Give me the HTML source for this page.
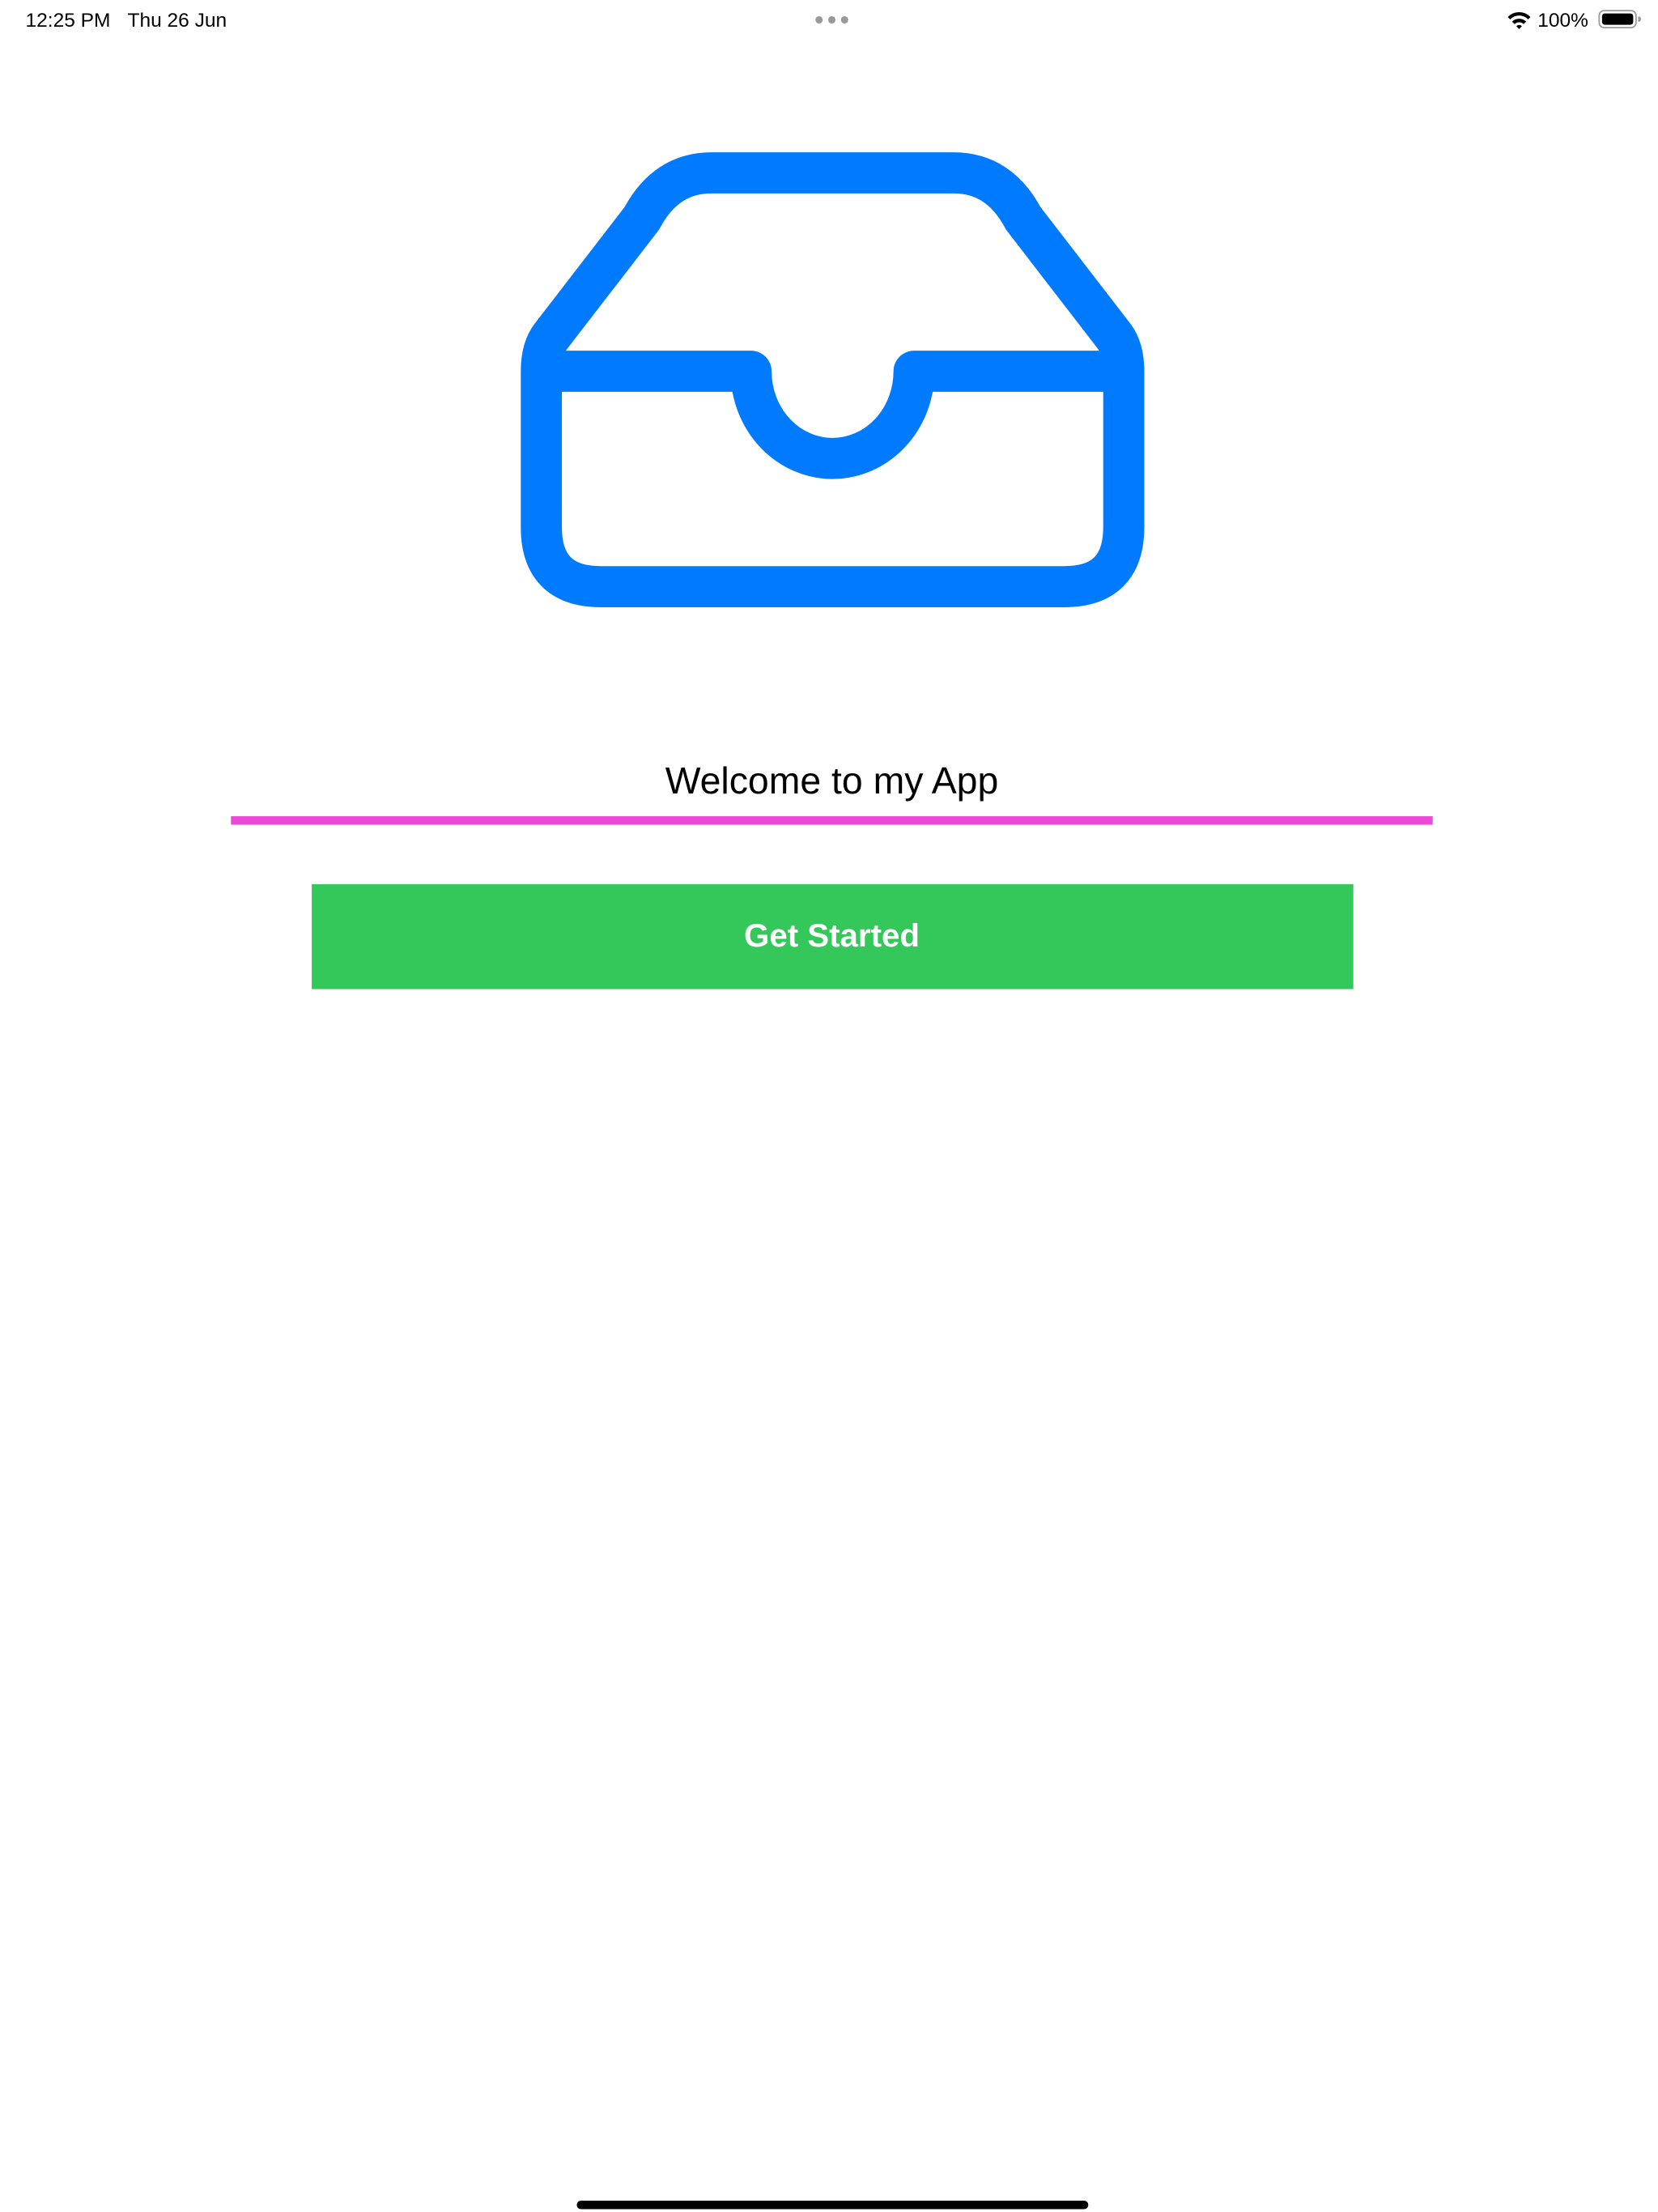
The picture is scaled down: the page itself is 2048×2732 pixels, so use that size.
<!DOCTYPE html>
<html><head><meta charset="utf-8"><style>
html,body{margin:0;padding:0;background:#fff;}
svg{display:block;}
</style></head><body>
<svg width="2048" height="2732" viewBox="0 0 1170 1561" preserveAspectRatio="none" xmlns="http://www.w3.org/2000/svg">
<rect width="1170" height="1561" fill="#fff"/>
<text x="18" y="19" font-family="Liberation Sans, sans-serif" font-size="14" fill="#000">12:25 PM</text>
<text x="90" y="19" font-family="Liberation Sans, sans-serif" font-size="14" fill="#000">Thu 26 Jun</text>
<circle cx="578" cy="14" r="2.6" fill="#999"/><circle cx="587" cy="14" r="2.6" fill="#999"/><circle cx="596" cy="14" r="2.6" fill="#999"/>
<g transform="translate(1072,15)" fill="#000">
<path d="M-8,-3 A11,11 0 0 1 8,-3 L6.3,-1.3 A8.6,8.6 0 0 0 -6.3,-1.3 Z"/>
<path d="M-5,0.3 A7,7 0 0 1 5,0.3 L3.2,2 A4.6,4.6 0 0 0 -3.2,2 Z"/>
<path d="M-2,3.4 A3,3 0 0 1 2,3.4 L0,5.6 Z"/>
</g>
<text x="1085" y="19" font-family="Liberation Sans, sans-serif" font-size="14" fill="#000">100%</text>
<rect x="1128.5" y="7.5" width="26" height="12" rx="3.5" fill="none" stroke="#999" stroke-width="1"/>
<rect x="1130.5" y="9.5" width="22" height="8" rx="2" fill="#000"/>
<path d="M1156,11.5 a2,2 0 0 1 0,4 Z" fill="#999"/>
<g fill="none" stroke="#007aff" stroke-width="29" stroke-linejoin="round">
<path d="M382,262 L382,372 Q382,414 424,414 L751,414 Q793,414 793,372 L793,262 Q793,246 786,237 L722,154 Q705,122 673,122 L502,122 Q470,122 453,154 L389,237 Q382,246 382,262 Z"/>
<path d="M382,262 L530,262 A57,61 0 0 0 645,262 L793,262"/>
</g>
<text x="587" y="560" text-anchor="middle" font-family="Liberation Sans, sans-serif" font-size="26.5" fill="#000">Welcome to my App</text>
<rect x="163" y="576" width="848" height="6" fill="#e84ad6"/>
<rect x="220" y="624" width="735" height="74" fill="#34c759"/>
<text x="587" y="668" text-anchor="middle" font-family="Liberation Sans, sans-serif" font-size="23" font-weight="bold" fill="#fff">Get Started</text>
<rect x="407" y="1553" width="361" height="6" rx="3" fill="#000"/>
</svg>
</body></html>
